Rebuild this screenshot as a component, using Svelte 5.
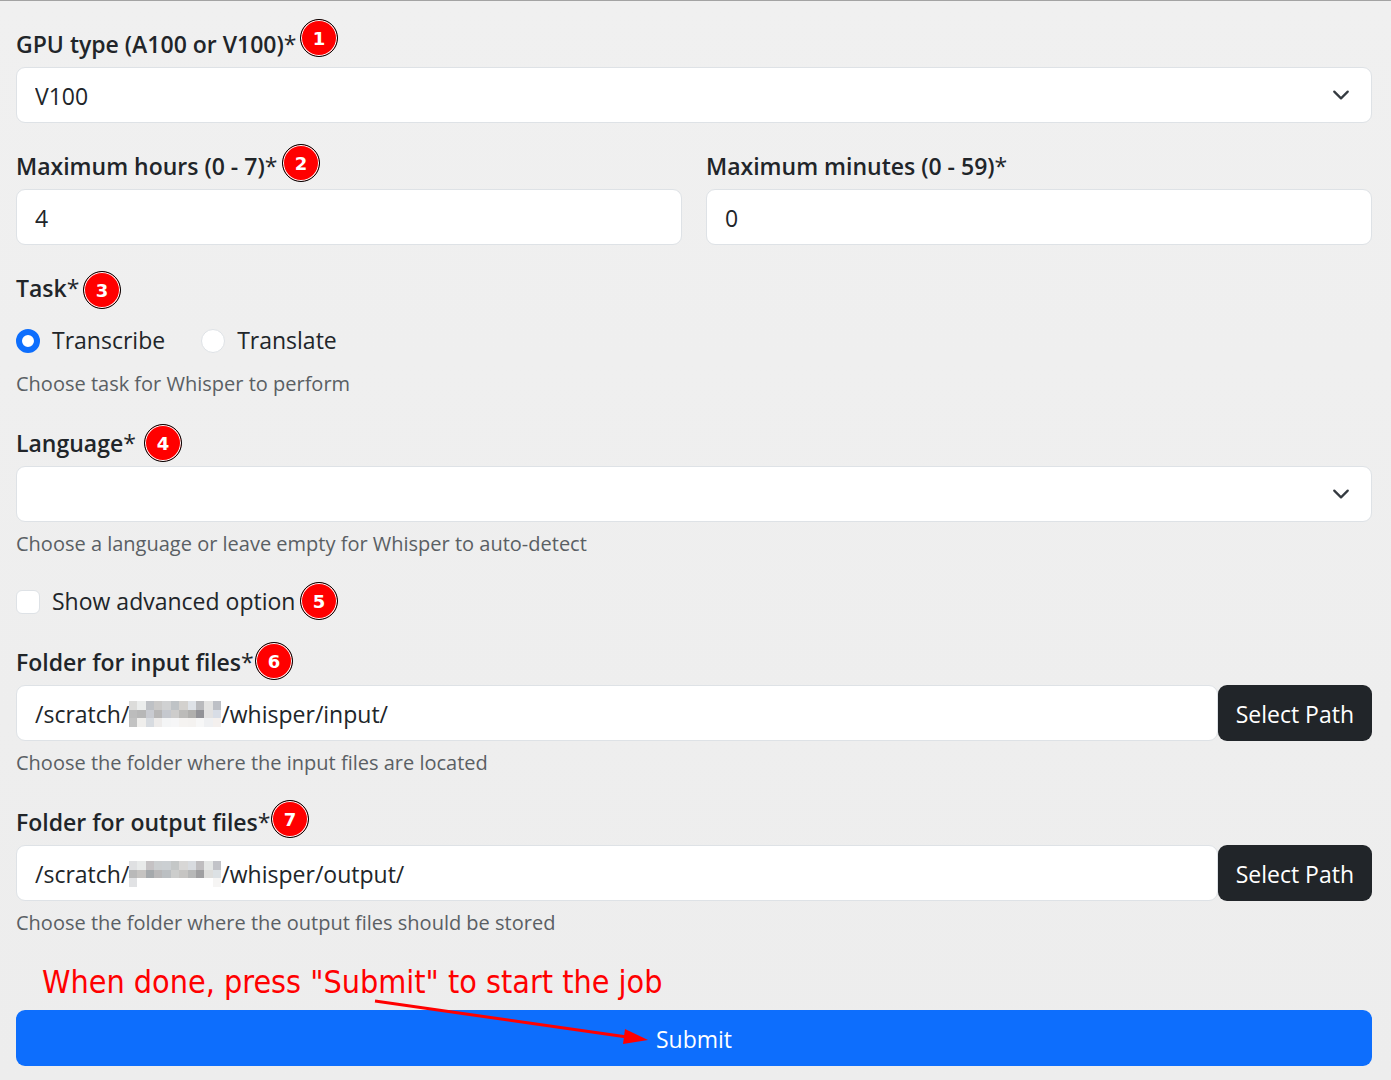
<script lang="ts">
    let gpu = 'V100';
    let hours = '4';
    let minutes = '0';
    let task = 'transcribe';
    let language = '';
    let advanced = false;

    // The user name in each path is masked by rows of grey cells
    let folders = [
        {
            id: 'input',
            label: 'Folder for input files',
            path: '/whisper/input/',
            help: 'Choose the folder where the input files are located',
            mask: [
                ['#dcdcda', '#ebedec', '#bec1c5', '#cac9c8', '#d0d1d2', '#bfc3c6', '#d3d1ce', '#dee2e7', '#b9babd', '#e3e3e2', '#bdc0c6'],
                ['#bcbcbc', '#b7b7b7', '#c9cbd1', '#b8b7b7', '#c5c8ce', '#cdcccb', '#bcbbb9', '#b0afad', '#929297', '#e2e1e1', '#d8dde6'],
                ['#c2c2c2', '#efeeec', '#d7dbe0', '#edebea', '#f4f5f6', '#f6f6f7', '#f5f3f1', '#f4f2f0', '#f7f7f7', '#eff0f2', '#f4f0ee'],
            ],
        },
        {
            id: 'output',
            label: 'Folder for output files',
            path: '/whisper/output/',
            help: 'Choose the folder where the output files should be stored',
            mask: [
                ['#dfe0e2', '#e8eaea', '#c5c2c4', '#cbced0', '#cbcfd2', '#c4c7c7', '#d8d7d6', '#d8dbdf', '#bfbdbf', '#e4e6e5', '#c2c3c8'],
                ['#b9b9b9', '#c5c3c1', '#a5a9ac', '#b9b8b9', '#bbbfc2', '#cccdcc', '#c6c5c3', '#b7b8b8', '#9f9fa1', '#dededc', '#dce1e4'],
                ['#e1e2e4', '#ffffff', '#ffffff', '#ffffff', '#ffffff', '#ffffff', '#ffffff', '#ffffff', '#ffffff', '#ffffff', '#f6f5f4'],
            ],
        },
    ];

    let pins = [
        { n: 1, x: 319, y: 38 },
        { n: 2, x: 301, y: 163 },
        { n: 3, x: 102, y: 290 },
        { n: 4, x: 163, y: 443 },
        { n: 5, x: 319, y: 601 },
        { n: 6, x: 274, y: 661 },
        { n: 7, x: 290, y: 819 },
    ];
</script>

<div class="page">
    <form on:submit|preventDefault>
        <div class="group">
            <label class="title" for="gpu">GPU type (A100 or V100)<span>*</span></label>
            <div class="select-wrap">
                <select id="gpu" class="control" bind:value={gpu}>
                    <option>A100</option>
                    <option>V100</option>
                </select>
                <svg class="chevron" viewBox="0 0 16 16" aria-hidden="true"><path d="m2 5 6 6 6-6" /></svg>
            </div>
        </div>

        <div class="row">
            <div class="group">
                <label class="title" for="hours">Maximum hours (0 - 7)<span>*</span></label>
                <input id="hours" class="control" type="text" bind:value={hours} />
            </div>
            <div class="group">
                <label class="title" for="minutes">Maximum minutes (0 - 59)<span>*</span></label>
                <input id="minutes" class="control" type="text" bind:value={minutes} />
            </div>
        </div>

        <fieldset class="group">
            <legend class="title">Task<span>*</span></legend>
            <div class="checks">
                <label class="check"><input type="radio" name="task" value="transcribe" bind:group={task} />Transcribe</label>
                <label class="check"><input type="radio" name="task" value="translate" bind:group={task} />Translate</label>
            </div>
            <p class="help">Choose task for Whisper to perform</p>
        </fieldset>

        <div class="group">
            <label class="title" for="language">Language<span>*</span></label>
            <div class="select-wrap">
                <select id="language" class="control" bind:value={language}>
                    <option value=""></option>
                </select>
                <svg class="chevron" viewBox="0 0 16 16" aria-hidden="true"><path d="m2 5 6 6 6-6" /></svg>
            </div>
            <p class="help">Choose a language or leave empty for Whisper to auto-detect</p>
        </div>

        <div class="group">
            <label class="check"><input type="checkbox" bind:checked={advanced} />Show advanced option</label>
        </div>

        {#each folders as folder}
            <div class="group">
                <label class="title" for={folder.id}>{folder.label}<span>*</span></label>
                <div class="path-row">
                    <div class="control path">
                        <span>/scratch/</span>
                        <svg class="mask" viewBox="0 0 11 3" preserveAspectRatio="none" shape-rendering="crispEdges" aria-hidden="true">
                            {#each folder.mask as cells, y}
                                {#each cells as fill, x}
                                    <rect {x} {y} width="1" height="1" {fill} />
                                {/each}
                            {/each}
                        </svg>
                        <input id={folder.id} type="text" bind:value={folder.path} />
                    </div>
                    <button type="button" class="select-path">Select Path</button>
                </div>
                <p class="help">{folder.help}</p>
            </div>
        {/each}

        <p class="note">When done, press "Submit" to start the job</p>
        <button type="submit" class="submit">Submit</button>
    </form>

    {#each pins as pin}
        <span class="pin" style="left: {pin.x}px; top: {pin.y}px;">{pin.n}</span>
    {/each}
    <svg class="arrow" viewBox="0 0 280 48" aria-hidden="true">
        <path d="M3 3 255 39" stroke="#f00" stroke-width="3" />
        <path d="M253 31 276 42 251 46z" fill="#f00" />
    </svg>
</div>

<style>
    :global(body) {
        background: #ededed;
    }
    .page {
        position: relative;
        border-top: 1px solid #a3a3a3;
        padding: 24px 19px 14px 16px;
        background: linear-gradient(#f0f0f0, #ededed);
        color: #212529;
        font-family: "Segoe UI", "Open Sans", "Noto Sans", sans-serif;
        font-size: 23px;
        line-height: 36px;
    }
    form {
        display: flex;
        flex-direction: column;
    }
    .group {
        flex: 1;
        min-width: 0;
        margin: 0 0 24px;
        padding: 0;
        border: none;
    }
    .row {
        display: flex;
        gap: 24px;
    }
    .title {
        display: block;
        margin-bottom: 4px;
        padding: 0;
        font-weight: 600;
        line-height: 38px;
    }
    .title span {
        font-weight: 400;
    }
    .control {
        display: block;
        box-sizing: border-box;
        width: 100%;
        height: 56px;
        padding: 2px 18px 0;
        border: 1px solid #dee2e6;
        border-radius: 9px;
        background: #fff;
        color: inherit;
        font: inherit;
        appearance: none;
    }
    .select-wrap {
        position: relative;
    }
    .chevron {
        position: absolute;
        right: 22px;
        top: 19px;
        width: 18px;
        height: 18px;
        fill: none;
        stroke: #343a40;
        stroke-width: 2;
        stroke-linecap: round;
        stroke-linejoin: round;
        pointer-events: none;
    }
    .checks {
        display: flex;
        gap: 36px;
        margin-top: 12px;
        margin-bottom: 10px;
    }
    .check {
        display: flex;
        align-items: center;
        gap: 12px;
        width: fit-content;
        line-height: 35px;
    }
    .check input {
        flex: none;
        appearance: none;
        width: 24px;
        height: 24px;
        margin: 0;
        border: 1px solid #dee2e6;
        border-radius: 6px;
        background: #fff;
    }
    .check input[type="radio"] {
        border-radius: 50%;
    }
    .check input[type="radio"]:checked {
        border: 6px solid #0d6efd;
    }
    .check input[type="checkbox"]:checked {
        background: #0d6efd;
    }
    .help {
        margin: 6px 0 0;
        color: #5a5f64;
        font-size: 20px;
        line-height: 32px;
    }
    .path-row {
        display: flex;
    }
    .path {
        display: flex;
        align-items: center;
        flex: 1;
        min-width: 0;
    }
    .path input {
        flex: 1;
        min-width: 0;
        padding: 0;
        border: none;
        outline: none;
        background: none;
        color: inherit;
        font: inherit;
    }
    .mask {
        flex: none;
        width: 92px;
        height: 26px;
    }
    button {
        height: 56px;
        border: none;
        border-radius: 9px;
        color: #fff;
        font: inherit;
        cursor: pointer;
    }
    .select-path {
        flex: none;
        padding: 2px 18px 0;
        background: #212529;
    }
    .submit {
        width: 100%;
        padding: 2px 0 0;
        background: #0d6efd;
    }
    .note {
        margin: 0 26px 9px;
        color: #f00;
        font-family: Tahoma, "DejaVu Sans Condensed", "DejaVu Sans", sans-serif;
        font-size: 32px;
        line-height: 38px;
    }
    .pin {
        position: absolute;
        box-sizing: border-box;
        width: 38px;
        height: 38px;
        margin: -20px 0 0 -19px;
        border: 1px solid #000;
        border-radius: 50%;
        background: #f00;
        box-shadow: inset 0 0 0 1px #fff;
        color: #fff;
        font: bold 18px/37px "DejaVu Sans", sans-serif;
        text-align: center;
    }
    .arrow {
        position: absolute;
        left: 372px;
        bottom: 34px;
        width: 280px;
        height: 48px;
        fill: none;
        pointer-events: none;
    }
</style>
